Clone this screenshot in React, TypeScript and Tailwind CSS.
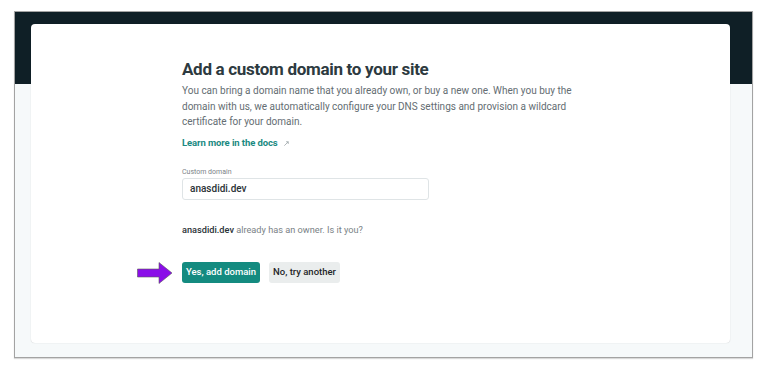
export default function App() {
  return (
    <div className="w-[768px] h-[372px] bg-white pt-[11px] pl-[14px] font-['Roboto',sans-serif]">
      <div className="w-[739px] h-[347px] border border-[#a3a3a3] shadow-[0_1px_1px_rgba(0,0,0,0.15)] bg-[linear-gradient(to_bottom,#0f1f26_72px,#f6f9fa_72px)] pt-[12px] pl-[16px] pr-[22px]">
        <div className="h-[319px] bg-white rounded-[4px] shadow-[0_0_1px_rgba(0,0,0,0.25)] pt-[33px] pl-[151px]">
          <h1 className="text-[17px] leading-[24px] font-bold text-[#2d3a40] tracking-[-0.3px]">
            Add a custom domain to your site
          </h1>
          <p className="mt-[2px] w-[392px] text-[10px] leading-[15.5px] text-[#646d72]">
            You can bring a domain name that you already own, or buy a new one. When you buy the domain with us, we
            automatically configure your DNS settings and provision a wildcard certificate for your domain.
          </p>
          <a className="mt-[6px] flex items-center gap-[5px] text-[9.5px] leading-[14px] font-bold text-[#1b8a82] tracking-[-0.1px]">
            Learn more in the docs
            <svg width="7" height="7" viewBox="0 0 8 8" className="text-[#9aa3a7] mt-[2px]">
              <path d="M1.5 6.5 L6 2 M3.5 2 H6 V4.5" stroke="currentColor" strokeWidth="0.9" fill="none" />
            </svg>
          </a>
          <div className="mt-[18px] text-[7px] leading-[9px] text-[#7b8387]">Custom domain</div>
          <div className="mt-[1px] w-[247px] h-[22px] border border-[#dfe4e6] rounded-[3px] flex items-center pl-[7px] text-[10px] font-medium text-[#2a3236]">
            anasdidi.dev
          </div>
          <p className="mt-[23px] text-[9.2px] leading-[14px] text-[#7a8286]">
            <span className="font-medium text-[#2a3236]">anasdidi.dev</span> already has an owner. Is it you?
          </p>
          <div className="mt-[25px] flex items-center gap-[9px] -ml-[45px]">
            <svg width="36" height="22" viewBox="0 0 36 22">
              <path d="M0.5 7 H22 V0.5 L35 11 L22 21.5 V15 H0.5 Z" fill="#8a0ee8" stroke="#5a5a5a" strokeWidth="0.6" />
            </svg>
            <button className="h-[21px] px-[4px] rounded-[3px] bg-[#148b80] text-white text-[9.5px] font-medium">
              Yes, add domain
            </button>
            <button className="h-[21px] px-[4px] rounded-[3px] bg-[#eaeded] text-[#1f2629] text-[9.5px] font-medium">
              No, try another
            </button>
          </div>
        </div>
      </div>
    </div>
  )
}
